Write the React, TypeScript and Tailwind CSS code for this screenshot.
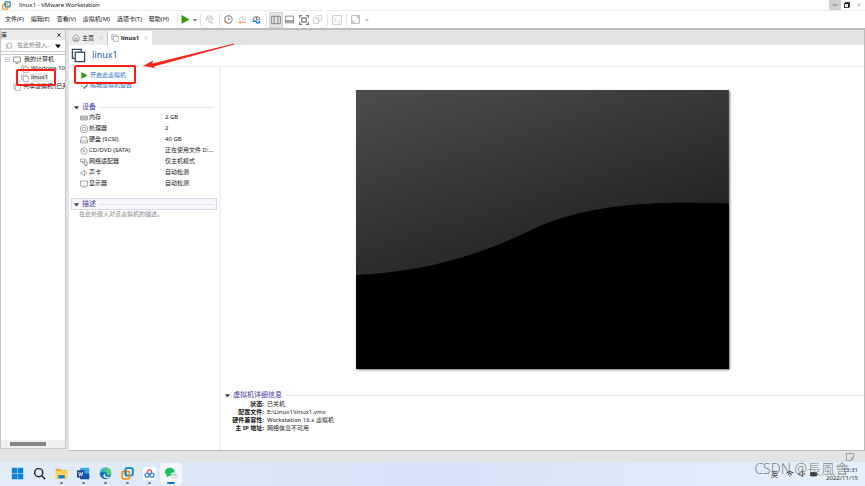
import type { ReactNode } from 'react';
import { X, Search, Home, Minus } from 'lucide-react';

interface IconProps {
  box?: string;
  className?: string;
  children: ReactNode;
}

function Icon({ box = '0 0 16 16', className = 'size-2', children }: IconProps) {
  return (
    <svg viewBox={box} className={`shrink-0 ${className}`} fill="none" stroke="currentColor" strokeWidth="1.4" aria-hidden="true">
      {children}
    </svg>
  );
}

const MENUS = ['文件(F)', '编辑(E)', '查看(V)', '虚拟机(M)', '选项卡(T)', '帮助(H)'];

const DEVICES: { name: string; value: string; icon: ReactNode }[] = [
  { name: '内存', value: '2 GB', icon: <path d="M1 4h14v8H1zM1 8h14M4 4v8M8 4v8M12 4v8" /> },
  { name: '处理器', value: '2', icon: <><rect x="1" y="1" width="14" height="14" rx="5" /><rect x="5" y="5" width="6" height="6" rx="1" /></> },
  { name: '硬盘 (SCSI)', value: '40 GB', icon: <path d="M3 2h10l2 8v4H1v-4zM1 10h14" /> },
  { name: 'CD/DVD (SATA)', value: '正在使用文件 D:...', icon: <><circle cx="8" cy="8" r="6.5" /><circle cx="8" cy="8" r="1.6" /><path d="M3.5 3.5l3 3" /></> },
  { name: '网络适配器', value: '仅主机模式', icon: <path d="M1 2h8v5H1zM4 7v3h5M9 8h6v5H9zM10 15h4M12 2v4" /> },
  { name: '声卡', value: '自动检测', icon: <path d="M2 6h3l4-4v12L5 10H2zM12 5q2 3 0 6" /> },
  { name: '显示器', value: '自动检测', icon: <path d="M1 2h14v10H1zM5 14.5h6" /> },
];

const DETAILS = [
  ['状态:', '已关机'],
  ['配置文件:', 'E:\\Linux1\\linux1.vmx'],
  ['硬件兼容性:', 'Workstation 16.x 虚拟机'],
  ['主 IP 地址:', '网络信息不可用'],
];

function VmwareLogo({ className }: { className: string }) {
  return (
    <Icon className={className}>
      <rect x="5.5" y="1.5" width="9" height="9" rx="1.5" stroke="#0b85bd" strokeWidth="2.2" />
      <rect x="1.5" y="5.5" width="9" height="9" rx="1.5" stroke="#f39318" strokeWidth="2.2" />
      <path d="M5.5 4v4.500q0 2 2 2" stroke="#0b85bd" strokeWidth="2" />
    </Icon>
  );
}

function VmIcon({ className }: { className?: string }) {
  return (
    <Icon className={className}>
      <path d="M4 11H1.5V1.5H11V4" />
      <rect x="4.5" y="4.5" width="10" height="10" fill="#fff" />
    </Icon>
  );
}

function PlayIcon({ className }: { className: string }) {
  return (
    <Icon className={className}>
      <path d="M1 0l14 8-14 8z" fill="#2f9a0d" stroke="none" />
    </Icon>
  );
}

function Caret({ className = 'size-1 text-[#666]' }: { className?: string }) {
  return (
    <Icon box="0 0 8 8" className={className}>
      <path d="M0 2h8L4 7z" fill="currentColor" stroke="none" />
    </Icon>
  );
}

function Divider() {
  return <span className="h-3 w-px shrink-0 bg-[#e4e4e4]" />;
}

function ToolButton({ label, active, children }: { label: string; active?: boolean; children: ReactNode }) {
  return (
    <button aria-label={label} className={`flex h-[14px] w-3 items-center justify-center ${active ? 'bg-[#e6e6e6] ring-1 ring-[#d2d2d2]' : ''}`}>
      {children}
    </button>
  );
}

function TitleBar() {
  return (
    <header className="flex h-[10px] shrink-0 items-center bg-white pl-[2px]">
      <VmwareLogo className="size-[9px]" />
      <h1 className="ml-2">linux1 - VMware Workstation</h1>
      <div className="ml-auto flex h-full">
        <button aria-label="最小化" className="flex w-3 items-center justify-center bg-[#cfcfcf]"><Minus className="size-[6px]" /></button>
        <button aria-label="还原" className="flex w-3 items-center justify-center text-black">
          <Icon className="size-[6px]"><path d="M4 4V1h11v12h-3M1 4h11v11H1z" strokeWidth="2.4" /></Icon>
        </button>
        <button aria-label="关闭" className="flex w-3 items-center justify-center text-[#777]"><X className="size-[6px]" /></button>
      </div>
    </header>
  );
}

function MenuBar() {
  return (
    <div className="flex h-[20px] shrink-0 items-center border-t border-b-2 border-t-[#ededed] border-b-[#bdbdbd] bg-white pl-1">
      <nav className="flex gap-[7px] pl-px whitespace-nowrap">
        {MENUS.map((menu) => <button key={menu}>{menu}</button>)}
      </nav>
      <div className="flex items-center gap-[3px] pl-2 text-[#777]">
        <div className="flex items-center gap-[3px]">
          <Divider />
          <button aria-label="开机"><PlayIcon className="size-[9px]" /></button>
          <Caret />
        </div>
        <Divider />
        <ToolButton label="发送 Ctrl+Alt+Del">
          <Icon className="size-[9px] text-[#bbb]"><path d="M4 6V2h8v4M2 11V6h12v3M5 9h4v4H5M12 10v5M10 13l2 2 2-2" /></Icon>
        </ToolButton>
        <Divider />
        <div className="flex gap-[2px]">
          <ToolButton label="拍摄快照">
            <Icon className="size-[9px]"><circle cx="8" cy="8" r="6.500" strokeWidth="1.8" /><path d="M8 4v4h3" /><path d="M1 10l3 4" stroke="#e8673a" strokeWidth="2.4" /></Icon>
          </ToolButton>
          <ToolButton label="恢复快照">
            <Icon className="size-[9px] text-[#bbb]"><path d="M2 9a6 6 0 1112 0M8 5v3h3" /><path d="M2 13h12M5 11l-3 2 3 2" stroke="#f0a27f" strokeWidth="2" /></Icon>
          </ToolButton>
          <ToolButton label="管理快照">
            <Icon className="size-[9px]"><path d="M2 9a6 6 0 1112 0M8 4v4h3" strokeWidth="1.8" /><path d="M1 11h8M7 14h7M12 10l2 4" stroke="#1583c9" strokeWidth="2.6" /></Icon>
          </ToolButton>
        </div>
        <Divider />
        <div className="flex gap-[2px]">
          <ToolButton label="显示库" active>
            <Icon className="size-[10px]"><path d="M1 2h14v12H1zM5 2v12M11 2v12" /></Icon>
          </ToolButton>
          <ToolButton label="缩略图栏">
            <Icon className="size-[9px]"><path d="M1 2h14v12H1zM1 10h14M1 12h14" /></Icon>
          </ToolButton>
          <ToolButton label="全屏">
            <Icon className="size-[10px]"><path d="M1 5V1h4M11 1h4v4M15 11v4h-4M5 15H1v-4M4.500 5h7v6h-7z" strokeWidth="1.8" /></Icon>
          </ToolButton>
          <ToolButton label="Unity">
            <Icon className="size-[9px] text-[#c4c4c4]"><path d="M6 1h9v9h-4M1 5h9v10H1zM4 4l8 8" /></Icon>
          </ToolButton>
        </div>
        <Divider />
        <ToolButton label="控制台">
          <Icon className="size-[10px] text-[#c4c4c4]"><path d="M1 1h14v14H1zM4 5l3 3-3 3M9 11h4" /></Icon>
        </ToolButton>
        <Divider />
        <ToolButton label="拉伸">
          <Icon className="size-[9px] text-[#aaa]"><path d="M1 1h14v14H1zM9 3h4v4M7 13H3V9" /></Icon>
        </ToolButton>
        <Caret className="size-1 text-[#bbb]" />
      </div>
    </div>
  );
}

function Library() {
  return (
    <aside className="mb-[2px] flex w-[66px] shrink-0 flex-col border border-t-0 border-[#c6c6c6] bg-white">
      <div className="flex h-[10px] items-center justify-between bg-[#e9eaeb] pr-[3px]">
        <h2>库</h2>
        <button aria-label="关闭库"><X className="size-[6px]" strokeWidth={3} /></button>
      </div>
      <label className="flex h-[12px] items-center gap-1 border-b border-[#ccc] px-1">
        <Search className="size-2 shrink-0 -scale-x-100 text-[#888]" />
        <input aria-label="搜索库" placeholder="在此处键入..." className="w-full min-w-0 placeholder:text-[#777]" />
        <Caret className="size-[6px] text-black" />
      </label>
      <ul className="mt-[2px] flex-1 overflow-hidden border-t border-[#ccc] leading-[9px] whitespace-nowrap">
        <li className="flex items-center gap-[3px] pl-1">
          <Icon className="size-[5px] text-[#6b86b3]"><path d="M1 1h14v14H1zM4 8h8" /></Icon>
          <Icon className="size-2 text-[#666]">{DEVICES[6].icon}</Icon>
          我的计算机
        </li>
        <li className="flex items-center gap-[2px] pl-5"><VmIcon className="size-2 text-[#999]" />Windows 10</li>
        <li className="flex items-center gap-[2px] pl-5">
          <VmIcon className="size-2 text-[#999]" /><span className="bg-[#e8e8e8]">linux1</span>
        </li>
        <li className="flex items-center gap-[2px] pl-3"><VmIcon className="size-2 text-[#999]" />共享虚拟机 (已弃用)</li>
      </ul>
      <div className="flex h-2 items-center bg-[#f0f0f0] px-[9px]"><span className="h-1 w-9 bg-[#858585]" /></div>
    </aside>
  );
}

function TabStrip() {
  return (
    <div className="flex h-[15px] shrink-0 items-end bg-[#e2e3e4]">
      <div className="flex h-[14px] items-center gap-[3px] border-r border-[#c8c8c8] bg-[#ececec] px-[3px]">
        <button className="flex items-center gap-[2px]"><Home className="size-2 text-[#777]" />主页</button>
        <button aria-label="关闭主页" className="ml-px text-[#bbb]"><X className="size-[6px]" /></button>
      </div>
      <div className="flex h-[14px] items-center gap-1 bg-white px-[3px]">
        <button className="flex items-center gap-[2px] font-bold"><VmIcon className="size-2 text-[#999]" />linux1</button>
        <button aria-label="关闭 linux1" className="text-[#aaa]"><X className="size-[6px]" /></button>
      </div>
    </div>
  );
}

function SectionTitle({ children }: { children: ReactNode }) {
  return (
    <h3 className="flex items-center gap-[3px] text-[7px] leading-[10px] whitespace-nowrap text-[#4a35a5]">
      <Caret className="size-[5px] text-[#334]" />
      {children}
      <span className="h-px flex-1 bg-[#e4e4ea]" />
    </h3>
  );
}

function Sidebar() {
  return (
    <section className="w-[152px] shrink-0 border-r-2 border-[#f1f1f1] px-[2px]">
      <div className="flex flex-col items-start pt-[3px] pl-[10px] text-[#2770c8]">
        <a href="#power-on" className="flex h-[10px] items-center gap-[2px]"><PlayIcon className="size-[7px]" />开启此虚拟机</a>
        <a href="#settings" className="flex h-[10px] items-center gap-[2px]">
          <Icon className="size-[7px] text-[#7aa]"><path d="M11 4V1H1v10h3" /><path d="M6 12l2 2 7-8" stroke="#168fc4" strokeWidth="3" /></Icon>
          编辑虚拟机设置
        </a>
      </div>
      <div className="mt-3 px-[3px]">
        <SectionTitle>设备</SectionTitle>
        <table className="w-full table-fixed leading-[11px] whitespace-nowrap">
          <tbody>
            {DEVICES.map((device) => (
              <tr key={device.name}>
                <th scope="row" className="w-[91px] pl-[6px] text-left font-normal">
                  <span className="flex items-center gap-px">
                    <Icon className="size-2 text-[#888]">{device.icon}</Icon>
                    {device.name}
                  </span>
                </th>
                <td>{device.value}</td>
              </tr>
            ))}
          </tbody>
        </table>
      </div>
      <div className="mt-[9px] border border-[#d3dbe6] bg-[#f6f8fb] px-[2px]">
        <SectionTitle>描述</SectionTitle>
      </div>
      <p className="pl-2 text-[#888]">在此处键入对该虚拟机的描述。</p>
    </section>
  );
}

function Screen() {
  return (
    <svg viewBox="0 0 371 278" className="mx-auto mt-[23px] block w-[58%] shadow-[1px_1px_2px_#777]" role="img" aria-label="虚拟机屏幕">
      <defs>
        <linearGradient id="glass" gradientUnits="userSpaceOnUse" x1="30" y1="5" x2="105" y2="240">
          <stop offset="0" stopColor="#4b4b4b" />
          <stop offset="0.8" stopColor="#262626" />
          <stop offset="1" stopColor="#191919" />
        </linearGradient>
      </defs>
      <rect width="371" height="278" fill="url(#glass)" />
      <path d="M0 184C65 181 115 167 171 141C230 111 305 111 371 113V278H0z" fill="#000" />
    </svg>
  );
}

function Details() {
  return (
    <section className="mt-[21px] pl-1">
      <SectionTitle>虚拟机详细信息</SectionTitle>
      <dl className="grid grid-cols-[39px_1fr] gap-x-[3px] leading-[8px]">
        {DETAILS.map(([term, value]) => (
          <div key={term} className="contents">
            <dt className="text-right font-bold whitespace-nowrap">{term}</dt>
            <dd>{value}</dd>
          </div>
        ))}
      </dl>
    </section>
  );
}

const APPS: { name: string; running?: boolean; active?: boolean; icon: ReactNode }[] = [
  { name: '开始', icon: <g stroke="none" fill="#0b83d9"><path d="M1 1h6.700v6.700H1zM8.300 1H15v6.700H8.300zM1 8.300h6.700V15H1zM8.300 8.300H15V15H8.300z" /></g> },
  { name: '搜索', icon: <g stroke="#222" strokeWidth="1.8"><circle cx="7" cy="7" r="5" /><path d="M10.500 10.500L15 15" /></g> },
  { name: '文件资源管理器', running: true, icon: <g stroke="none"><path d="M1 2h5l2 2h7v10H1z" fill="#e9a820" /><path d="M1 5h14v9H1z" fill="#ffd35a" /><path d="M4 10h8v4H4z" fill="#1582ca" /></g> },
  { name: 'Word', running: true, icon: <g stroke="none"><path d="M4 1h11v14H4z" fill="#37a5e8" /><path d="M4 8h11v7H4z" fill="#174fa8" /><path d="M0 4h9v9H0z" fill="#1a4a9e" /><path d="M2 6l1.200 5 1.300-4 1.300 4L7 6" fill="none" stroke="#fff" strokeWidth="1" /></g> },
  { name: 'Edge', running: true, icon: <g stroke="none"><circle cx="8" cy="8" r="7" fill="#0d6fc4" /><path d="M1 8a7 7 0 0114-1c0 3-3 4-5 3 1-4-5-6-9-2z" fill="#35bfc0" /><path d="M8 1c5 0 7 3 7 6 0 3-3 4-5 3z" fill="#57ce72" /><path d="M8 7q-2 2 0 4t6 1q-3 3-7 1T8 7z" fill="#eef5fb" /></g> },
  { name: 'VMware', running: true, icon: null },
  { name: '百度网盘', running: true, icon: <g strokeWidth="1.6"><rect width="16" height="16" rx="2" fill="#fff" stroke="none" /><circle cx="8" cy="6" r="2.500" stroke="#e94e64" /><circle cx="5" cy="10" r="2.500" stroke="#2b8df0" /><circle cx="11" cy="10" r="2.500" stroke="#2b8df0" /></g> },
  { name: '微信', running: true, active: true, icon: <g stroke="none"><ellipse cx="6" cy="6" rx="6" ry="5" fill="#19c45c" /><path d="M2 9v4l4-3z" fill="#19c45c" /><ellipse cx="11.500" cy="10.500" rx="4.500" ry="4" fill="#e2e5e5" /><path d="M4 4.500v1M8 4.500v1M10 9v1M13 9v1" stroke="#567" strokeWidth="1" /></g> },
];

function Taskbar() {
  return (
    <footer className="relative flex h-6 shrink-0 items-center bg-gradient-to-r from-[#e3edf8] via-[#d6e3f7] to-[#e4f1fa] pl-[6px]">
      {APPS.map((app) => (
        <button
          key={app.name}
          aria-label={app.name}
          className={`flex h-[22px] w-[22px] flex-col items-center justify-end gap-[2px] rounded-sm pb-px ${app.active ? 'bg-[#f3f7fc]' : ''}`}
        >
          {app.icon ? <Icon className="size-[13px]">{app.icon}</Icon> : <VmwareLogo className="size-[13px]" />}
          <span className={`h-[2px] rounded-full ${app.active ? 'w-2 bg-[#0878cf]' : 'w-[3px]'} ${app.running && !app.active ? 'bg-[#777]' : ''}`} />
        </button>
      ))}
      <div className="ml-auto flex items-center gap-1 pr-[7px] text-[#333]">
        <span className="pr-1 text-[7px]">英</span>
        <Icon className="size-2"><path d="M1 6q7-6 14 0M4 9q4-4 8 0M7 12h2" strokeWidth="2" /></Icon>
        <Icon className="size-2">{DEVICES[5].icon}</Icon>
        <Icon className="size-2"><path d="M1 5h12v7H1zM15 7v3" fill="currentColor" /></Icon>
        <time className="pl-1 text-right leading-[8px]">13:31<br />2022/11/15</time>
      </div>
      <p className="absolute right-4 bottom-2 text-[14px] leading-[18px] font-light text-[#666]/80">CSDN @長風會</p>
    </footer>
  );
}

export default function App() {
  return (
    <div className="relative flex h-screen flex-col overflow-hidden bg-[#e2e3e4] font-['Noto_Sans','Noto_Sans_CJK_SC',sans-serif] text-[6px] leading-[9px] text-[#161616]">
      <TitleBar />
      <MenuBar />
      <div className="flex min-h-0 flex-1 gap-[3px]">
        <Library />
        <main className="flex min-w-0 flex-1 flex-col border-r border-b border-[#bbb] bg-white">
          <TabStrip />
          <div className="flex h-[22px] shrink-0 items-center gap-[6px] border-b border-[#ececec] pl-[2px]">
            <VmIcon className="size-[15px] text-[#34495e]" />
            <h2 className="pb-[2px] text-[9px] leading-[14px] text-[#2165b5]">linux1</h2>
          </div>
          <div className="flex min-h-0 flex-1">
            <Sidebar />
            <div className="min-w-0 flex-1"><Screen /><Details /></div>
          </div>
        </main>
      </div>
      <div className="flex h-[11px] shrink-0 items-center justify-end pr-[11px] text-[#888]">
        <Icon className="size-2"><path d="M1 1h14v9l-4 5V10h4M11 15H1V1" /></Icon>
      </div>
      <Taskbar />

      {/* red callouts over the window */}
      <div className="pointer-events-none absolute top-[65px] left-[74px] h-[19px] w-[62px] rounded-[2px] border-2 border-[#fb1c14]" />
      <div className="pointer-events-none absolute top-[69px] left-[16px] h-[17px] w-[40px] rounded-[2px] border-2 border-[#fb1c14]" />
      <svg viewBox="0 0 92 26" className="pointer-events-none absolute top-[43px] left-[143px] w-[92px]" aria-hidden="true">
        <path d="M0 23L10 17.500 9.500 20.500 91 .5 91 1.500 11 23.500 12 25z" fill="#f5281f" />
      </svg>
    </div>
  );
}
